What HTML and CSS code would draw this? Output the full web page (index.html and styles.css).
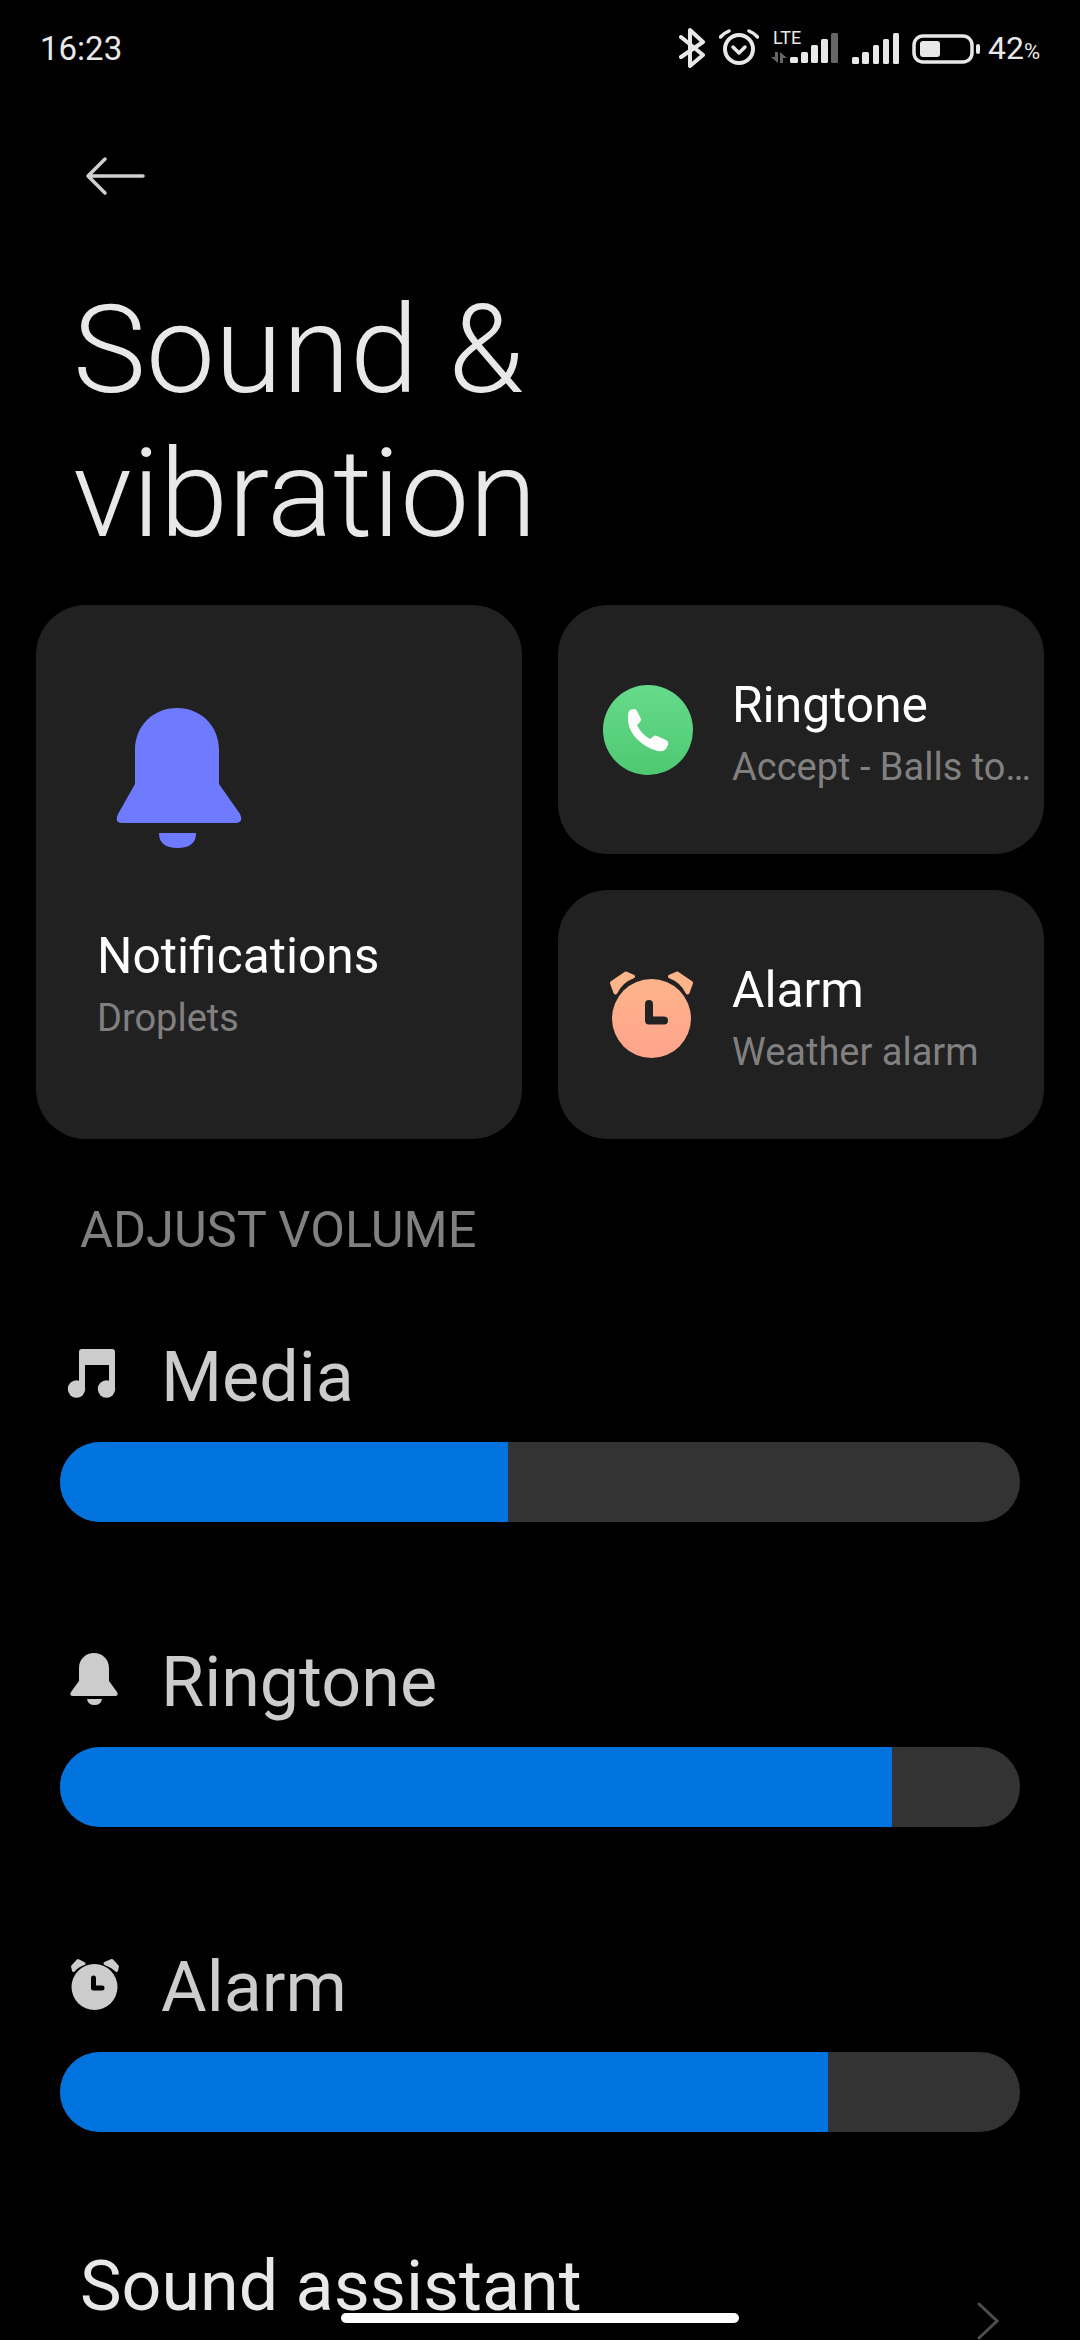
FILE: index.html
```html
<!DOCTYPE html>
<html lang="en">
<head>
<meta charset="utf-8">
<title>Sound &amp; vibration</title>
<link rel="stylesheet" href="styles.css">
</head>
<body>
<div class="screen">
  <header class="status">
    <span class="time">16:23</span>
    <div class="status-icons">
      <svg class="ic-bt" viewBox="0 0 26 40" width="26" height="40"><path d="M2 9 L24 27 L11 38 V2 L24 14 L2 29" fill="none" stroke="#e8e8e8" stroke-width="4" stroke-linejoin="round" stroke-linecap="round"/></svg>
      <svg class="ic-al" viewBox="0 0 40 38" width="40" height="38"><circle cx="20" cy="20" r="14" fill="none" stroke="#e8e8e8" stroke-width="4"/><path d="M14 18 L20 24 L26 18" fill="none" stroke="#e8e8e8" stroke-width="3.5" stroke-linecap="round" stroke-linejoin="round"/><path d="M1.500 8 Q5 4 10 2 M38.500 8 Q35 4 30 2" fill="none" stroke="#e8e8e8" stroke-width="3.500" stroke-linecap="round"/></svg>
      <div class="sim">
        <span class="lte">LTE</span>
        <svg viewBox="0 0 68 32" width="68" height="32" class="sig1">
          <path d="M1 25 L5 25 L5 20 L8 20 L8 31 Z M10 20 L17 26 L13 26 L13 31 L10 31 Z" fill="#666"/>
          <rect x="20" y="25" width="8" height="6" rx="1.500" fill="#e8e8e8"/>
          <rect x="31" y="20" width="7" height="11" rx="1.500" fill="#e8e8e8"/>
          <rect x="41" y="13" width="7" height="18" rx="1.500" fill="#e8e8e8"/>
          <rect x="51" y="7" width="7" height="24" rx="1.500" fill="#e8e8e8"/>
          <rect x="61" y="1" width="7" height="30" rx="1.500" fill="#666"/>
        </svg>
      </div>
      <svg class="ic-sig2" viewBox="0 0 48 31" width="48" height="31">
        <rect x="1" y="24" width="7" height="7" rx="1.500" fill="#e8e8e8"/>
        <rect x="11" y="19" width="7" height="12" rx="1.500" fill="#e8e8e8"/>
        <rect x="22" y="12" width="6" height="19" rx="1.500" fill="#e8e8e8"/>
        <rect x="32" y="6" width="6" height="25" rx="1.500" fill="#e8e8e8"/>
        <rect x="42" y="0" width="6" height="31" rx="1.500" fill="#e8e8e8"/>
      </svg>
      <svg class="ic-bat" viewBox="0 0 68 30" width="68" height="30">
        <rect x="2" y="2" width="58" height="26" rx="9" fill="none" stroke="#e8e8e8" stroke-width="3.500"/>
        <rect x="8" y="7" width="20" height="16" rx="3" fill="#e8e8e8"/>
        <rect x="64" y="10" width="4" height="10" rx="2" fill="#e8e8e8"/>
      </svg>
      <span class="pct">42<small>%</small></span>
    </div>
  </header>

  <nav class="nav">
    <svg viewBox="0 0 60 40" width="60" height="40"><path d="M58 20 H3 M20 3 L3 20 L20 37" fill="none" stroke="#d0d0d0" stroke-width="3.500" stroke-linecap="round" stroke-linejoin="round"/></svg>
  </nav>

  <h1 class="title">Sound &amp;<br>vibration</h1>

  <section class="cards">
    <a class="card card-big">
      <svg class="bell-big" viewBox="0 0 126 141" width="126" height="141"><path d="M19 42 C19 18 37 0 61 0 C85 0 103 18 103 42 V76 L124 106 Q128 115 119 115 H6 Q-2 115 2 106 L19 76 Z M43 125 H80 Q80 140 61.500 140 Q43 140 43 125 Z" fill="#6e7bff"/></svg>
      <div class="card-name">Notifications</div>
      <div class="card-sub">Droplets</div>
    </a>
    <a class="card card-small">
      <svg class="card-ic" viewBox="0 0 90 90" width="90" height="90">
        <defs><linearGradient id="gr" x1="0" y1="0" x2="0" y2="1"><stop offset="0" stop-color="#66db8b"/><stop offset="1" stop-color="#4fc872"/></linearGradient></defs>
        <circle cx="45" cy="45" r="45" fill="url(#gr)"/>
        <path d="M27 25 L31 24 Q33 24 34 26 L38 34 Q38 36 37 37 L34 40 Q38 49 47 54 L51 51 Q52 50 54 51 L63 55 Q66 57 65 60 L63 64 Q60 67 55 66 Q42 63 32 52 Q24 42 25 31 Q25 27 27 25 Z" fill="#fff"/>
      </svg>
      <div class="card-text">
        <div class="card-name">Ringtone</div>
        <div class="card-sub">Accept - Balls to…</div>
      </div>
    </a>
    <a class="card card-small">
      <svg class="card-ic" viewBox="0 0 90 90" width="90" height="90">
        <defs><linearGradient id="or" x1="0" y1="0" x2="0" y2="1"><stop offset="0" stop-color="#fdb48a"/><stop offset="1" stop-color="#ffa38d"/></linearGradient></defs>
        <circle cx="48.500" cy="48.500" r="39.500" fill="url(#or)"/>
        <path d="M9 13 L23 3.500 L30 6.500 Q18 11 12.500 22.500 Z M88 13 L74 3.500 L67 6.500 Q79 11 84.500 22.500 Z" fill="#fdb48a" stroke="#fdb48a" stroke-width="4" stroke-linejoin="round"/>
        <path d="M46 34 V50.500 H61" fill="none" stroke="#222" stroke-width="8" stroke-linecap="round" stroke-linejoin="round"/>
      </svg>
      <div class="card-text">
        <div class="card-name">Alarm</div>
        <div class="card-sub">Weather alarm</div>
      </div>
    </a>
  </section>

  <h2 class="section-label">ADJUST VOLUME</h2>

  <section class="volumes">
    <div class="vol">
      <div class="vol-head">
        <svg viewBox="0 0 60 60" width="60" height="60"><path d="M13 41 V4 Q13 1 16 1 H46 Q49 1 49 4 V41 H43 V17 H19 V41 Z" fill="#ccc"/><circle cx="10.500" cy="41" r="8.700" fill="#ccc"/><circle cx="40.500" cy="41" r="8.700" fill="#ccc"/></svg>
        <span>Media</span>
      </div>
      <div class="bar"><div class="fill" style="width:46.7%"></div></div>
    </div>
    <div class="vol">
      <div class="vol-head">
        <svg viewBox="0 0 60 60" width="60" height="60"><path d="M13 15 C13 6 20 0 28 0 C36 0 43 6 43 15 V28 L51 39 Q53 43 49 43 H7 Q3 43 5 39 L13 28 Z M21 46 H36 Q35 52 28.500 52 Q22 52 21 46 Z" fill="#ccc"/></svg>
        <span>Ringtone</span>
      </div>
      <div class="bar"><div class="fill" style="width:86.7%"></div></div>
    </div>
    <div class="vol">
      <div class="vol-head">
        <svg viewBox="0 0 60 60" width="60" height="60"><circle cx="28.500" cy="29" r="23" fill="#ccc"/><path d="M6.500 8.500 L12 2.500 L18 5.500 Q11 8 7.500 12.500 Z M51.500 8.500 L46 2.500 L39 5.500 Q46 8 50.500 12.500 Z" fill="#ccc" stroke="#ccc" stroke-width="3" stroke-linejoin="round"/><path d="M27.500 20 V30 H36" fill="none" stroke="#000" stroke-width="5" stroke-linecap="round" stroke-linejoin="round"/></svg>
        <span>Alarm</span>
      </div>
      <div class="bar"><div class="fill" style="width:80%"></div></div>
    </div>
  </section>

  <div class="assist">
    <span>Sound assistant</span>
    <svg viewBox="0 0 22 38" width="22" height="38"><path d="M2 2 L20 19 L2 36" fill="none" stroke="#4d4d4d" stroke-width="3" stroke-linecap="round"/></svg>
  </div>

  <div class="home"></div>
</div>
</body>
</html>
```

FILE: styles.css
```css
* { box-sizing: border-box; }
html, body { margin: 0; padding: 0; background: #000; }
.screen {
  position: relative;
  width: 1080px;
  height: 2340px;
  overflow: hidden;
  background: #000;
  font-family: Roboto, "Noto Sans", sans-serif;
  color: #fff;
}
.status {
  height: 96px;
  display: flex;
  justify-content: space-between;
  align-items: center;
  padding: 0 40px;
  color: #e8e8e8;
}
.time { font-size: 33px; }
.status-icons { display: flex; align-items: center; }
.ic-bt { margin-right: 14px; }
.ic-al { margin-right: 11px; }
.sim { position: relative; width: 68px; height: 32px; margin-right: 13px; }
.lte { position: absolute; left: 3px; top: -3px; font-size: 18px; line-height: 18px; color: #e8e8e8; }
.sig1 { display: block; }
.ic-sig2 { margin-right: 13px; margin-top: 1px; }
.ic-bat { margin-right: 8px; margin-top: 1px; }
.pct { font-size: 32px; }
.pct small { font-size: 22px; }
.nav { height: 62px; padding-left: 85px; padding-top: 60px; }
.nav svg { display: block; }
.title {
  margin: 120px 0 0 0;
  padding-left: 73px;
  font-size: 123px;
  line-height: 144px;
  font-weight: 300;
  color: #e8e8e8;
}
.cards {
  margin: 39px 36px 0;
  display: grid;
  grid-template-columns: 486px 486px;
  grid-template-rows: 249px 249px;
  gap: 36px;
}
.card {
  display: flex;
  background: #212121;
  border-radius: 50px;
}
.card-big {
  grid-row: 1 / span 2;
  flex-direction: column;
  padding: 103px 0 0 61px;
}
.bell-big { display: block; margin: 0 0 78px 19px; flex: none; }
.card-small { align-items: center; padding-left: 45px; }
.card-ic { flex: none; margin-right: 39px; }
.card-text { padding-top: 6px; }
.card-name { font-size: 49.7px; line-height: 58px; font-weight: 400; color: #fff; }
.card-sub { font-size: 38px; line-height: 46px; margin-top: 10px; color: #808080; white-space: nowrap; }
.section-label {
  margin: 63px 0 0 80px;
  font-size: 50.5px;
  line-height: 56px;
  font-weight: 400;
  color: #808080;
}
.volumes { margin: 0 60px; }
.vol { margin-top: 82px; }
.vol + .vol { margin-top: 123px; }
.vol-head {
  height: 76px;
  display: flex;
  align-items: center;
  font-size: 70px;
  color: #ccc;
  margin-bottom: 26px;
}
.vol-head span { padding-bottom: 3px; }
.vol-head svg { flex: none; margin-left: 6px; margin-right: 35px; }
.bar {
  height: 80px;
  border-radius: 40px;
  background: #333;
  overflow: hidden;
}
.fill { height: 100%; background: #0073de; }
.assist {
  margin: 116px 0 0 80px;
  padding-right: 81px;
  display: flex;
  justify-content: space-between;
  font-size: 70px;
  line-height: 76px;
  color: #e8e8e8;
}
.assist svg { margin-top: 54px; flex: none; }
.home {
  position: absolute;
  left: 341px;
  top: 2313px;
  width: 398px;
  height: 10px;
  border-radius: 5px;
  background: #fff;
}
```
